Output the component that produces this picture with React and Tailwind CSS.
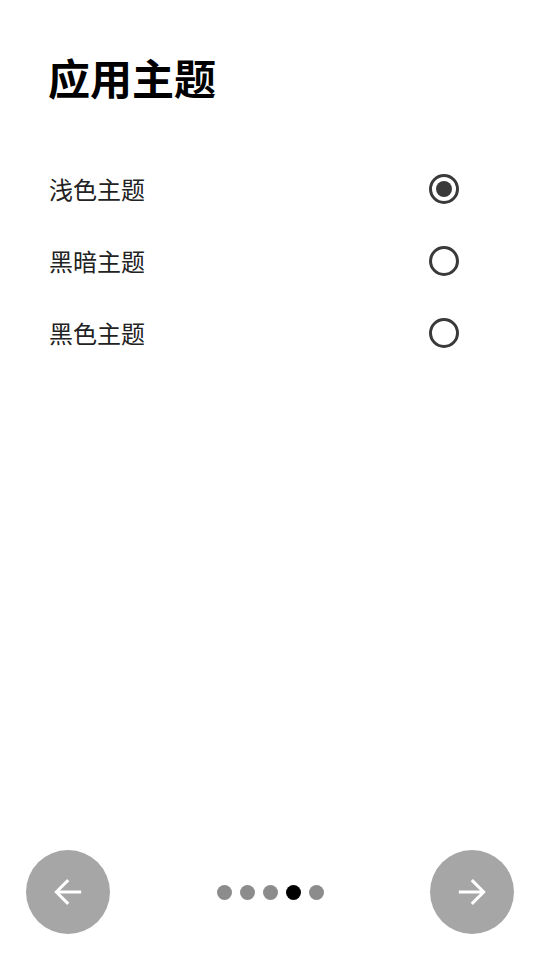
import React, { useState } from 'react';

const themes = ['浅色主题', '黑暗主题', '黑色主题'];

const Radio = ({ checked }) => (
  <div className="w-[30px] h-[30px] rounded-full border-[3px] border-[#3a3a3a] flex items-center justify-center">
    {checked && <div className="w-[16px] h-[16px] rounded-full bg-[#3a3a3a]" />}
  </div>
);

const ArrowLeft = () => (
  <svg width="40" height="40" viewBox="0 0 24 24" fill="none" stroke="white" strokeWidth="1.8" strokeLinecap="square">
    <path d="M19 12H5.5M11.5 5.5L5 12l6.5 6.5" />
  </svg>
);

const ArrowRight = () => (
  <svg width="40" height="40" viewBox="0 0 24 24" fill="none" stroke="white" strokeWidth="1.8" strokeLinecap="square">
    <path d="M5 12h13.5M12.5 5.5L19 12l-6.5 6.5" />
  </svg>
);

export default function App() {
  const [selected, setSelected] = useState(0);

  return (
    <div
      className="w-[540px] h-[960px] bg-white flex flex-col"
      style={{ fontFamily: '"Noto Sans CJK SC", "Noto Sans", sans-serif' }}
    >
      <h1 className="pt-[56px] px-[48px] text-[42px] leading-[42px] font-bold text-black">应用主题</h1>

      <div className="mt-[55px] flex flex-col">
        {themes.map((t, i) => (
          <div
            key={t}
            onClick={() => setSelected(i)}
            className="h-[72px] pl-[49px] pr-[81px] flex items-center justify-between"
          >
            <span className="text-[24px] leading-none text-[#222]">{t}</span>
            <Radio checked={selected === i} />
          </div>
        ))}
      </div>

      <div className="mt-auto pb-[26px] px-[26px] flex items-center justify-between">
        <button className="w-[84px] h-[84px] rounded-full bg-[#a6a6a6] flex items-center justify-center">
          <ArrowLeft />
        </button>
        <div className="flex items-center gap-[8px]">
          {[0, 1, 2, 3, 4].map((d) => (
            <div
              key={d}
              className={`w-[15px] h-[15px] rounded-full ${d === 3 ? 'bg-black' : 'bg-[#8c8c8c]'}`}
            />
          ))}
        </div>
        <button className="w-[84px] h-[84px] rounded-full bg-[#a6a6a6] flex items-center justify-center">
          <ArrowRight />
        </button>
      </div>
    </div>
  );
}
